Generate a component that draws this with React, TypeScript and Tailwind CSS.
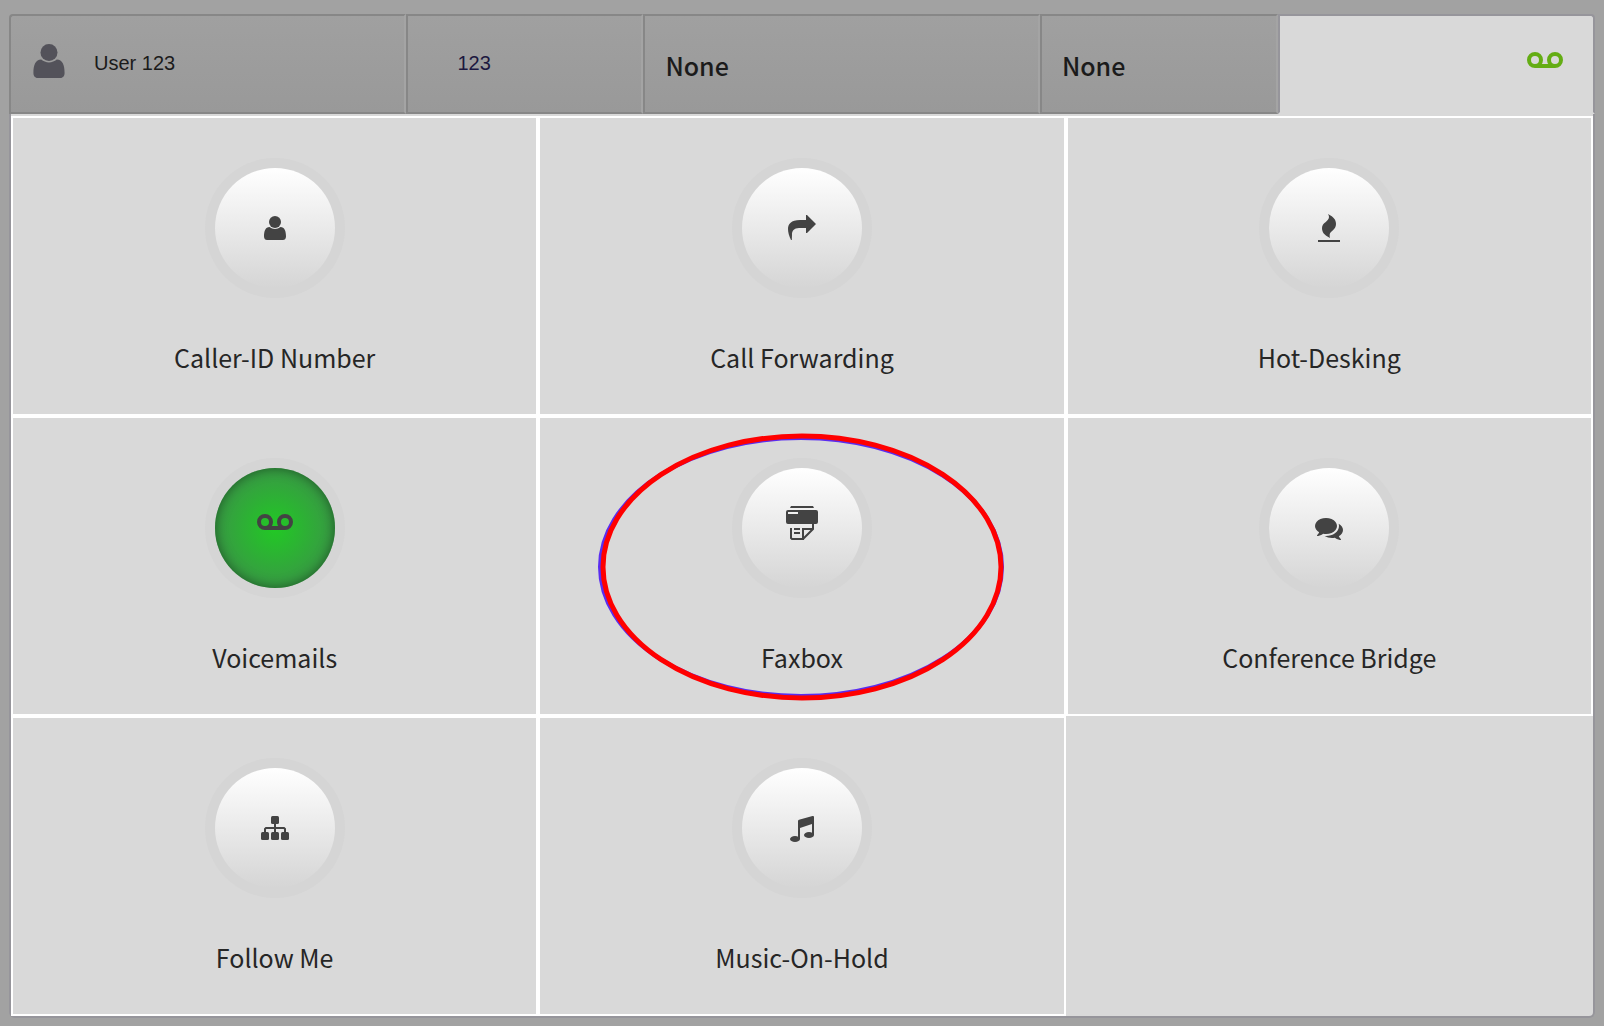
import type { FC, ReactNode } from "react";
import clsx from "clsx";

const UserShape: FC = () => (
  <>
    <circle cx="24" cy="18" r="6" />
    <path d="M18.5 23c1.6 1.3 3.4 2 5.5 2s3.9-.7 5.5-2C33.5 23 35 27 35 32.5c0 2.5-1.5 3.5-3 3.5H16c-1.5 0-3-1-3-3.5C13 27 14.500 23 18.500 23z" />
  </>
);

const VoicemailShape: FC = () => (
  <g fill="none" stroke="currentColor" strokeWidth="4">
    <circle cx="14" cy="18" r="6" />
    <circle cx="34" cy="18" r="6" />
    <path d="M14 24h20" />
  </g>
);

const ForwardShape: FC = () => (
  <path d="M28 11h1l9 9-9 9h-1v-5h-7c-5 0-7.300 3-7 7l-.2 5H13c-2-4-3-8-3-11 0-5 3-9 12-9h6z" />
);

const FlameShape: FC = () => (
  <>
    <path d="M23 10c6 3 8 6 8 10 0 6-6 7-6.300 10.500-.1 1.500 0 2.500.3 3.500-6-3-8-6-8-10 0-5.500 7-6.500 7-11 0-1-.4-2-1-3z" />
    <path d="M13 36h22v2H13z" />
  </>
);

const FaxShape: FC = () => (
  <>
    <path d="M13 2h22l1 2H12z" />
    <path
      fillRule="evenodd"
      d="M10 6h28a2 2 0 0 1 2 2v10a2 2 0 0 1-2 2H10a2 2 0 0 1-2-2V8a2 2 0 0 1 2-2zM10 8v2h10V8z"
    />
    <path d="M16 24h6v2h-6zM16 28h6v2h-6z" />
    <path
      d="M13 24v10l1 1h11V25h10M35 20v5L25 35"
      fill="none"
      stroke="currentColor"
      strokeWidth="2"
    />
  </>
);

const CommentsShape: FC = () => (
  <path
    transform="translate(10 10) scale(.015625)"
    d="M1408 768q0 139-94 257t-256.500 186.500-353.500 68.500q-86 0-176-16-124 88-278 128-36 9-86 16h-3q-11 0-20.500-8t-11.500-21q-1-3-1-6.500t.5-6.500 2-6l2.500-5 3.500-5.500 4-5 4.500-5 4-4.500q5-6 23-25t26-29.500 22.500-29 25-38.500 20.500-44q-124-72-195-177t-71-224q0-139 94-257t256.500-186.500 353.500-68.500 353.500 68.500 256.500 186.500 94 257zm384 256q0 120-71 224.500t-195 176.500q10 24 20.500 44t25 38.500 22.500 29 26 29.500 23 25q1 1 4 4.500t4.500 5 4 5 3.500 5.500l2.500 5 2 6 .5 6.500-1 6.500q-3 14-13 22t-22 7q-50-7-86-16-154-40-278-128-90 16-176 16-271 0-472-132 58 4 88 4 161 0 309-45t264-129q125-92 192-212t67-254q0-77-23-152 129 71 204 178t75 230z"
  />
);

const SitemapShape: FC = () => (
  <>
    <rect x="20" y="12" width="8" height="8" rx="1.500" />
    <rect x="10" y="28" width="8" height="8" rx="1.500" />
    <rect x="20" y="28" width="8" height="8" rx="1.500" />
    <rect x="30" y="28" width="8" height="8" rx="1.500" />
    <path
      d="M24 20v8M14 28v-3l1-1h18l1 1v3"
      fill="none"
      stroke="currentColor"
      strokeWidth="2"
    />
  </>
);

const MusicShape: FC = () => (
  <>
    <path d="M20 17q0-1 1-1.300L34.500 12q1.500-.3 1.500 1v18h-2V20l-12 4v11h-2z" />
    <ellipse cx="17" cy="35" rx="5" ry="3" />
    <ellipse cx="31" cy="31" rx="5" ry="3" />
  </>
);

type Feature = {
  label: string;
  icon: FC;
  active?: boolean;
  marked?: boolean;
};

const features: Feature[] = [
  { label: "Caller-ID Number", icon: UserShape },
  { label: "Call Forwarding", icon: ForwardShape },
  { label: "Hot-Desking", icon: FlameShape },
  { label: "Voicemails", icon: VoicemailShape, active: true },
  { label: "Faxbox", icon: FaxShape, marked: true },
  { label: "Conference Bridge", icon: CommentsShape },
  { label: "Follow Me", icon: SitemapShape },
  { label: "Music-On-Hold", icon: MusicShape },
];

const HeaderCell: FC<{ className: string; children: ReactNode }> = ({
  className,
  children,
}) => (
  <div
    className={clsx(
      "flex items-center border-2 border-[#878787] border-r-[#a4a4a4] bg-linear-to-b from-[#a0a0a0] to-[#999999]",
      className,
    )}
  >
    {children}
  </div>
);

const Marker: FC = () => (
  <svg
    className="pointer-events-none absolute inset-0 m-auto h-[270px] w-[408px]"
    viewBox="0 0 408 270"
    fill="none"
    aria-hidden="true"
  >
    <ellipse cx="203" cy="136" rx="201" ry="129" stroke="#5a2df0" strokeWidth="4" />
    <ellipse cx="204" cy="136" rx="199" ry="131" stroke="#ff0000" strokeWidth="5" />
  </svg>
);

const FeatureTile: FC<{ feature: Feature }> = ({ feature }) => {
  const Icon = feature.icon;
  return (
    <button
      type="button"
      className="relative flex cursor-pointer flex-col items-center border-2 border-white pt-10 pb-[39px]"
    >
      <span className="rounded-full bg-[#d5d5d5] p-2.5">
        <span
          className={clsx(
            "flex size-[120px] items-center justify-center rounded-full",
            feature.active
              ? "bg-[radial-gradient(circle_closest-side,#21c924,#399845)] shadow-[inset_0_0_12px_#1b5a22]"
              : "bg-linear-to-b from-white to-[#d5d5d5]",
          )}
        >
          <svg
            className="size-12 text-[#434343]"
            viewBox="0 0 48 48"
            fill="currentColor"
            aria-hidden="true"
          >
            <Icon />
          </svg>
        </span>
      </span>
      <span className="mt-[41px] text-[25px] leading-9">{feature.label}</span>
      {feature.marked && <Marker />}
    </button>
  );
};

export default function App() {
  return (
    <main className="min-h-screen bg-[#a2a2a2] px-[9px] pt-3.5 pb-2 font-['Noto_Sans_CJK_SC',sans-serif] text-[#262626]">
      <header className="flex h-[100px] text-[#1b1b1b]">
        <HeaderCell className="w-1/4 gap-[29px] rounded-tl pb-0.5 pl-[22px] font-['Liberation_Sans',sans-serif] text-xl">
          <svg
            className="mb-1 h-[34px] w-8 text-[#53525a]"
            viewBox="13 12 22 24"
            fill="currentColor"
            aria-hidden="true"
          >
            <UserShape />
          </svg>
          User 123
        </HeaderCell>
        <HeaderCell className="w-[15%] pb-0.5 pl-[50px] font-['Liberation_Sans',sans-serif] text-xl text-[#1c1840]">
          123
        </HeaderCell>
        <HeaderCell className="w-1/4 pt-1 pl-5 text-[25px] font-medium">
          None
        </HeaderCell>
        <HeaderCell className="w-[15%] pt-1 pl-5 text-[25px] font-medium">
          None
        </HeaderCell>
        <div className="flex flex-1 items-center justify-end rounded-tr border-2 border-[#96959b] border-b-[#d9d9d9] bg-[#d9d9d9] pr-7.5 pb-2">
          <svg
            className="h-4 w-9 text-[#64ad14]"
            viewBox="6 10 36 16"
            fill="currentColor"
            role="img"
            aria-label="Voicemail"
          >
            <VoicemailShape />
          </svg>
        </div>
      </header>
      <section className="grid grid-cols-3 rounded-b-md border-x-2 border-b-2 border-[#96959b] bg-[#d9d9d9] pt-0.5">
        {features.map((feature) => (
          <FeatureTile key={feature.label} feature={feature} />
        ))}
      </section>
    </main>
  );
}
